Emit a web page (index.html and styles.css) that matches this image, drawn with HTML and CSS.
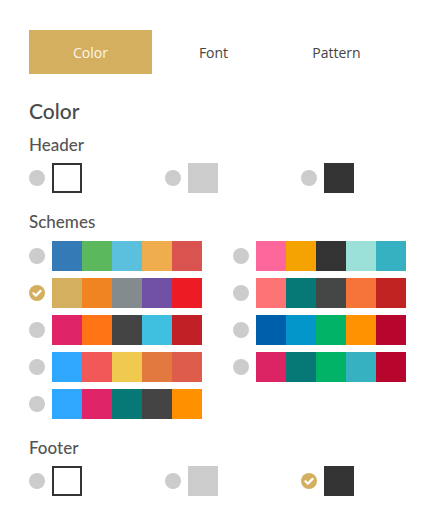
FILE: index.html
```html
<!DOCTYPE html>
<html>
<head>
<meta charset="utf-8">
<link rel="stylesheet" href="styles.css">
</head>
<body>
<div class="panel">
  <div class="tabs">
    <div class="tab active">Color</div>
    <div class="tab">Font</div>
    <div class="tab">Pattern</div>
  </div>
  <h1 class="title">Color</h1>

  <h2 class="label">Header</h2>
  <div class="solo-row">
    <div class="opt"><span class="radio"></span><span class="sq sq-white"></span></div>
    <div class="opt"><span class="radio"></span><span class="sq sq-gray"></span></div>
    <div class="opt"><span class="radio"></span><span class="sq sq-dark"></span></div>
  </div>

  <h2 class="label label-schemes">Schemes</h2>
  <div class="schemes">
    <div class="col">
      <div class="opt"><span class="radio"></span><span class="pal"><i style="background:#337ab7"></i><i style="background:#5cb85c"></i><i style="background:#5bc0de"></i><i style="background:#f0ad4e"></i><i style="background:#d9534f"></i></span></div>
      <div class="opt"><span class="radio checked"><svg viewBox="0 0 16 16" width="16" height="16"><circle cx="8" cy="8" r="8" fill="#d4af5f"/><path d="M4.4 8.2 L6.9 10.6 L11.6 5.9" fill="none" stroke="#fff" stroke-width="2.2" stroke-linecap="round" stroke-linejoin="round"/></svg></span><span class="pal"><i style="background:#d4af5f"></i><i style="background:#f08421"></i><i style="background:#838b8f"></i><i style="background:#7051a5"></i><i style="background:#ed1c24"></i></span></div>
      <div class="opt"><span class="radio"></span><span class="pal"><i style="background:#df2567"></i><i style="background:#ff7515"></i><i style="background:#444444"></i><i style="background:#40c0e0"></i><i style="background:#c12026"></i></span></div>
      <div class="opt"><span class="radio"></span><span class="pal"><i style="background:#30a7ff"></i><i style="background:#f25858"></i><i style="background:#f0c94f"></i><i style="background:#e27a40"></i><i style="background:#de5c4b"></i></span></div>
      <div class="opt"><span class="radio"></span><span class="pal"><i style="background:#30a7ff"></i><i style="background:#df2567"></i><i style="background:#067876"></i><i style="background:#444444"></i><i style="background:#ff9100"></i></span></div>
    </div>
    <div class="col">
      <div class="opt"><span class="radio"></span><span class="pal"><i style="background:#fe679b"></i><i style="background:#f4a300"></i><i style="background:#333333"></i><i style="background:#9ce0da"></i><i style="background:#36b1c1"></i></span></div>
      <div class="opt"><span class="radio"></span><span class="pal"><i style="background:#fe7474"></i><i style="background:#067876"></i><i style="background:#454646"></i><i style="background:#f6743a"></i><i style="background:#c12323"></i></span></div>
      <div class="opt"><span class="radio"></span><span class="pal"><i style="background:#005fab"></i><i style="background:#0396cb"></i><i style="background:#00b367"></i><i style="background:#ff9200"></i><i style="background:#b7062e"></i></span></div>
      <div class="opt"><span class="radio"></span><span class="pal"><i style="background:#dc2464"></i><i style="background:#067876"></i><i style="background:#00b367"></i><i style="background:#36b1c1"></i><i style="background:#b7062e"></i></span></div>
    </div>
  </div>

  <h2 class="label label-footer">Footer</h2>
  <div class="solo-row">
    <div class="opt"><span class="radio"></span><span class="sq sq-white"></span></div>
    <div class="opt"><span class="radio"></span><span class="sq sq-gray"></span></div>
    <div class="opt"><span class="radio checked"><svg viewBox="0 0 16 16" width="16" height="16"><circle cx="8" cy="8" r="8" fill="#d4af5f"/><path d="M4.4 8.2 L6.9 10.6 L11.6 5.9" fill="none" stroke="#fff" stroke-width="2.2" stroke-linecap="round" stroke-linejoin="round"/></svg></span><span class="sq sq-dark"></span></div>
  </div>
</div>
</body>
</html>
```
FILE: styles.css
```css
html, body {
  margin: 0;
  padding: 0;
  background: #fff;
}
.panel {
  padding: 30px 29px 0 29px;
  font-family: "Lato", "Open Sans", sans-serif;
  color: #555;
}
.tabs {
  display: flex;
  height: 44px;
}
.tab {
  width: 123px;
  display: flex;
  align-items: center;
  justify-content: center;
  font-family: "Open Sans", sans-serif;
  font-size: 14px;
  color: #444;
}
.tab.active {
  background: #d4af5f;
  color: #fbf6ea;
}
.title {
  margin: 25px 0 0 0;
  font-size: 21px;
  font-weight: 500;
  line-height: 24px;
  color: #4a4a4a;
}
.label {
  margin: 12px 0 0 0;
  font-size: 17px;
  font-weight: 500;
  line-height: 20px;
  color: #555;
}
.label-schemes { margin-top: 19px; }
.label-footer { margin-top: 19px; }
.solo-row {
  display: grid;
  grid-template-columns: 136px 136px 136px;
  margin-top: 8px;
}
.opt {
  display: flex;
  align-items: center;
  gap: 7px;
}
.radio {
  width: 16px;
  height: 16px;
  border-radius: 50%;
  background: #cccccc;
  flex: none;
  display: block;
}
.radio.checked {
  background: none;
}
.radio svg { display: block; }
.sq {
  width: 30px;
  height: 30px;
  box-sizing: border-box;
  display: block;
}
.sq-white { border: 2px solid #333; background: #fff; }
.sq-gray { background: #cccccc; }
.sq-dark { background: #333333; }
.schemes {
  display: grid;
  grid-template-columns: 204px 174px;
  margin-top: 9px;
}
.col {
  display: flex;
  flex-direction: column;
  gap: 7px;
}
.pal {
  display: flex;
}
.pal i {
  width: 30px;
  height: 30px;
  display: block;
}
```
